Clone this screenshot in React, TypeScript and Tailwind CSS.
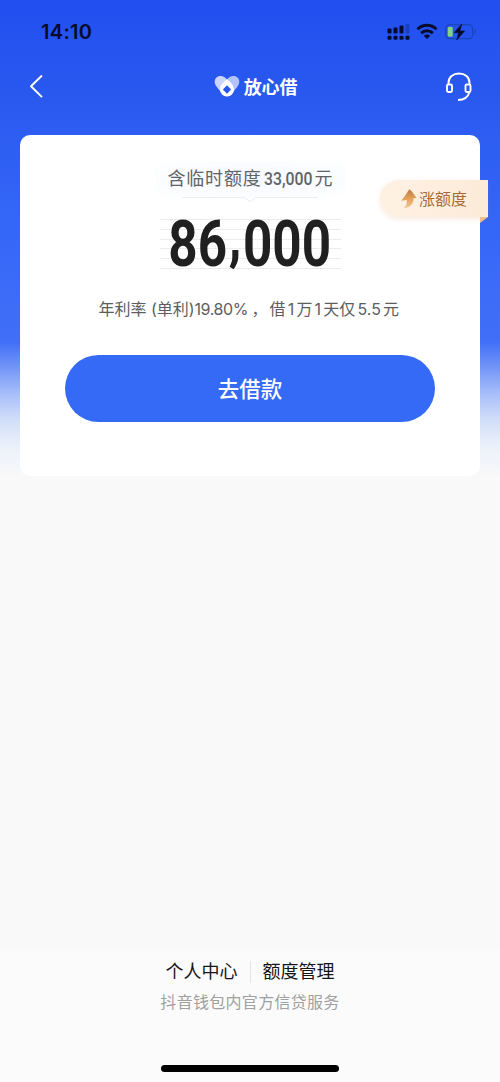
import React from 'react';

const footerLinks = ['个人中心', '额度管理'];

const StatusBar = () => (
  <div className="flex h-[60px] items-start justify-between pl-[41px] pr-[22px] pt-[21px] text-[#050b28]">
    <span className="font-['Inter'] text-[20px] font-semibold leading-[22px] tracking-[0.3px]">14:10</span>
    <div className="flex items-start pt-[2px]">
      <svg width="24" height="18" viewBox="0 0 24 18" fill="currentColor">
        <rect x="0.5" y="5.5" width="4" height="5" rx="1" />
        <rect x="6.5" y="4.5" width="4" height="6" rx="1" />
        <rect x="12.5" y="2.5" width="4" height="8" rx="1" />
        <rect x="18.5" y="1" width="4" height="9.5" rx="1" opacity="0.25" />
        <rect x="0.5" y="12.8" width="4" height="4" rx="1.2" />
        <rect x="6.5" y="12.8" width="4" height="4" rx="1.2" />
        <rect x="12.5" y="12.8" width="4" height="4" rx="1.2" />
        <rect x="18.5" y="12.8" width="4" height="4" rx="1.2" />
      </svg>
      <svg className="ml-[5px]" width="22" height="18" viewBox="0 0 22 18" fill="none" stroke="currentColor" strokeWidth="2.9">
        <path d="M1.5 6.2C7 .9 15 .9 20.5 6.2" />
        <path d="M5.1 10.1c3.4-3.2 8.4-3.2 11.8 0" />
        <path d="M11 16l-3.2-3.3c1.8-1.6 4.6-1.6 6.4 0z" fill="currentColor" stroke="none" />
      </svg>
      <svg className="ml-[6px]" width="34" height="18" viewBox="0 0 34 18" fill="none">
        <rect x="1.7" y="1.7" width="27" height="14" rx="4" stroke="#1a46b8" strokeWidth="1.3" />
        <rect x="3.7" y="3.7" width="5" height="10" rx="1.5" fill="#83d47c" />
        <path d="M17.8 1L10 9.7h4.6L12.7 17l8-9.1h-4.8z" fill="currentColor" stroke="currentColor" strokeWidth="0.5" />
        <path d="M30.5 6.5c2.3.8 2.3 3.8 0 4.5z" fill="#1a46b8" />
      </svg>
    </div>
  </div>
);

const NavBar = () => (
  <div className="flex h-[75px] items-start justify-between pl-[29px] pr-[27px] pt-[11px] text-white">
    <svg className="mt-[3px]" width="28" height="25" viewBox="0 0 28 25" fill="none" stroke="currentColor" strokeWidth="1.9">
      <path d="M13 1.5L2 12.3l11 10.8" strokeLinejoin="round" />
    </svg>
    <div className="flex items-start pl-[9px] pt-[4px]">
      <svg width="26" height="22" viewBox="0 0 26 22" fill="white">
        <path d="M2.5 11.5C-1.2 7 1.2 1 6.5 1c2.7 0 4.8 1.3 6.5 3.7v16.6c-2 0-3.2-.8-4.4-2z" opacity="0.75" />
        <path d="M23.5 11.5C27.2 7 24.8 1 19.5 1c-2.7 0-4.8 1.3-6.5 3.7v16.6c2 0 3.2-.8 4.4-2z" opacity="0.65" />
        <path d="M13 4c2.400 2.400 7 6 7 10.500a7 7 0 0 1-14 0C6 10 10.600 6.400 13 4z" />
        <path d="M13 11.300l3.200 3.200-3.200 3.200-3.200-3.200z" fill="#2958ef" stroke="#2958ef" strokeWidth="1.400" strokeLinejoin="round" />
      </svg>
      <span className="ml-[4px] whitespace-nowrap font-['Noto_Sans_CJK_SC',sans-serif] text-[18px] font-bold leading-[22px] tracking-[-0.2px]">放心借</span>
    </div>
    <svg width="28" height="32" viewBox="0 0 28 32" fill="none" stroke="currentColor" strokeWidth="1.9">
      <path d="M3.5 13.5V12C3.5 6.200 8 2.500 14 2.500S24.500 6.200 24.500 12v1.500" />
      <rect x="2" y="13.500" width="5" height="7.500" rx="1.200" />
      <rect x="20.500" y="13.500" width="5" height="7.500" rx="1.200" />
      <path d="M24.500 21c-1.500 5.200-5 8-11.500 8" />
    </svg>
  </div>
);

const RaiseQuotaTag = () => (
  <div className="absolute left-[360px] top-[45px] h-[44px] w-[108px]">
    <div className="flex h-[37px] items-center rounded-l-full rounded-tr-[2px] bg-gradient-to-r from-[#fef1e3] to-[#fdebd9] pl-[20px] shadow-[0_2px_5px_rgba(220,140,80,0.2)]">
      <svg width="18" height="22" viewBox="0 0 18 22">
        <defs>
          <linearGradient id="arrow" x1="0" y1="0" x2="0" y2="1">
            <stop offset="0" stopColor="#b97a41" />
            <stop offset="0.5" stopColor="#e6a05a" />
            <stop offset="1" stopColor="#f3c698" />
          </linearGradient>
        </defs>
        <path d="M9.300 1.200c2.800 2.300 5 5 7.200 8.800l-3 .2c.4 5.300-3.300 9.300-9.800 10 2.500-2 3.400-4.600 3.100-8.200l-5.600.8C4 9.600 6.400 5.500 9.300 1.200z" fill="url(#arrow)" />
      </svg>
      <span className="ml-px whitespace-nowrap text-[16px] leading-[22px] text-[#a86b36]">涨额度</span>
    </div>
    <svg className="absolute right-0 top-[37px]" width="8" height="6" viewBox="0 0 8 6">
      <path d="M0 0h8L0 6z" fill="#eebd90" />
    </svg>
  </div>
);

const QuotaCard = () => (
  <div className="relative mx-5 flex h-[341px] flex-col items-center rounded-[10px] bg-white">
    <div className="mt-[26px] flex h-[36px] w-[190px] items-center justify-center bg-[radial-gradient(ellipse_at_center,#f5f8ff_0%,#fafcff_60%,#ffffff_100%)] text-[18px] leading-[26px] text-[#626367]">
      <span className="w-[95px] whitespace-nowrap tracking-[0.8px]">含临时额度</span>
      <span className="ml-px w-[49px]">
        <span className="inline-block origin-left scale-x-[0.83] font-['Roboto'] text-[19px] font-medium">33,000</span>
      </span>
      <span className="ml-[2px]">元</span>
    </div>
    <svg width="172" height="6" viewBox="0 0 172 6" fill="none" stroke="#e9eefa">
      <path d="M18 .5h62l6 4 6-4h62" />
    </svg>
    <div className="mt-[16px] flex h-[50px] w-[181px] justify-center bg-[repeating-linear-gradient(to_bottom,#ececec_0px,#ececec_1px,transparent_1px,transparent_9.800px)]">
      <span className="origin-center scale-x-[0.8] whitespace-nowrap font-['Roboto'] text-[64px] font-bold leading-[52px] text-[#202020]">
        86
        <span className="relative -top-[8px] ml-[2px] mr-[2px]">,</span>
        000
      </span>
    </div>
    <p className="mt-[28px] flex h-[24px] w-[303px] whitespace-nowrap text-[16px] leading-[24px] text-[#5c5d61]">
      <span className="w-[96px]">年利率 (单利)</span>
      <span className="w-[57px] tracking-[-0.4px]">19.80%</span>
      <span className="w-[18px]">，</span>
      <span className="[word-spacing:-2.300px]">借 1 万 1 天仅 5.5 元</span>
    </p>
    <button className="mt-[34px] h-[67px] w-[370px] rounded-full bg-[#356af6] text-[21.5px] font-medium leading-[30px] text-white">
      去借款
    </button>
    <RaiseQuotaTag />
  </div>
);

const App = () => {
  return (
    <div className="flex h-[1082px] w-[500px] flex-col overflow-hidden bg-[#f9f9f9] bg-[linear-gradient(to_bottom,#214ff0_0px,#2958ef_90px,#3466f7_220px,#416ff8_342px,#7899f8_370px,#a9c0fa_395px,#d2def9_420px,#eaf0fa_445px,#f9f9f9_478px)] font-['Inter','Noto_Sans_CJK_SC',sans-serif]">
      <StatusBar />
      <NavBar />
      <QuotaCard />
      <div className="mt-auto flex h-[134px] flex-col items-center bg-[#fbfbfb] pt-[11px]">
        <div className="flex items-center text-[18px] leading-[26px] text-[#151515]">
          <span className="pr-[12px]">{footerLinks[0]}</span>
          <span className="h-[22px] w-px bg-[#e5e5e5]" />
          <span className="pl-[12px]">{footerLinks[1]}</span>
        </div>
        <p className="mt-[5px] text-[16px] leading-[24px] tracking-[0.3px] text-[#a0a0a2]">抖音钱包内官方信贷服务</p>
        <div className="mb-[10px] mt-auto h-[7px] w-[178px] rounded-full bg-black" />
      </div>
    </div>
  );
};

export default App;
